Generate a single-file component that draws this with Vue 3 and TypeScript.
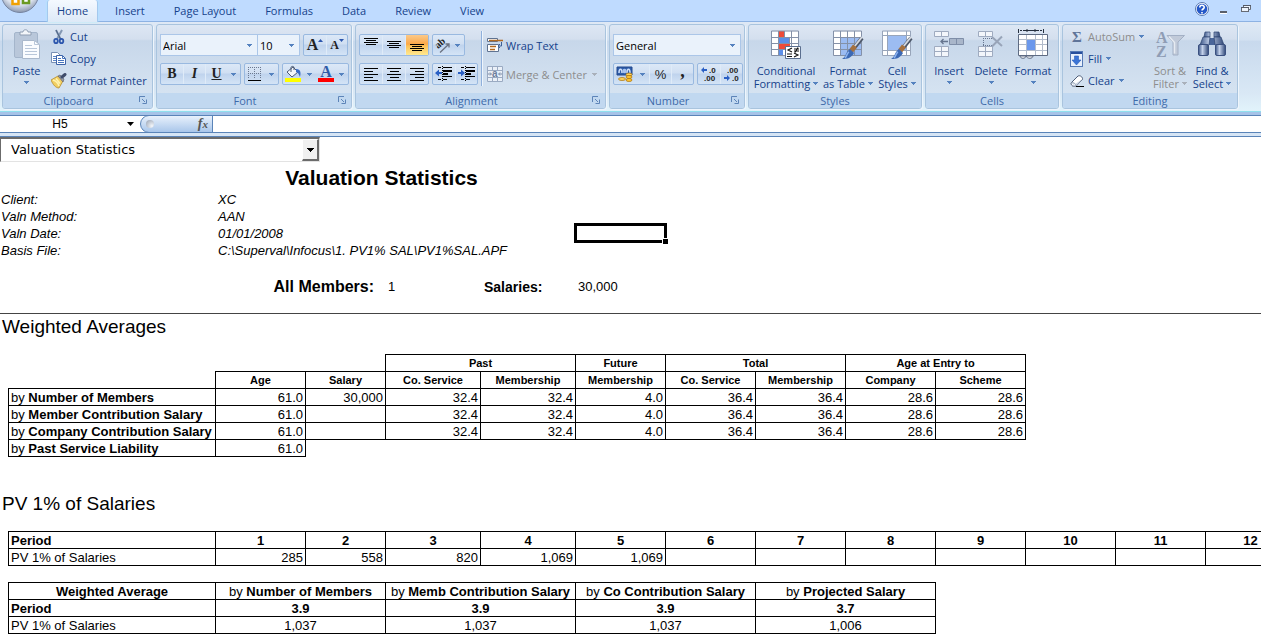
<script setup lang="ts">
import { ref } from 'vue'

const tabs = ['Home', 'Insert', 'Page Layout', 'Formulas', 'Data', 'Review', 'View']
const activeTab = ref('Home')
const fontName = ref('Arial')
const fontSize = ref('10')
const numberFormat = ref('General')
const cellRef = ref('H5')
const formula = ref('')
const report = ref('Valuation Statistics')

// Small drop-down arrow shared by the ribbon controls
const down = 'M0 0h5v1h-1v1h-1v1h-1v-1h-1v-1h-1z'
const launcher = 'M.5 6V.5H6M3 3l3 3M3.5 7.5h4v-4'

const info = [
  { label: 'Client:', value: 'XC', selected: false },
  { label: 'Valn Method:', value: 'AAN', selected: false },
  { label: 'Valn Date:', value: '01/01/2008', selected: true },
  { label: 'Basis File:', value: 'C:\\Superval\\Infocus\\1. PV1% SAL\\PV1%SAL.APF', selected: false },
]

const subHeads = ['Age', 'Salary', 'Co. Service', 'Membership', 'Membership', 'Co. Service', 'Membership', 'Company', 'Scheme']
const averages = [
  { name: 'Number of Members', cells: ['61.0', '30,000', '32.4', '32.4', '4.0', '36.4', '36.4', '28.6', '28.6'] },
  { name: 'Member Contribution Salary', cells: ['61.0', '', '32.4', '32.4', '4.0', '36.4', '36.4', '28.6', '28.6'] },
  { name: 'Company Contribution Salary', cells: ['61.0', '', '32.4', '32.4', '4.0', '36.4', '36.4', '28.6', '28.6'] },
  { name: 'Past Service Liability', cells: ['61.0'] },
]

const periods = Array.from({ length: 12 }, (_, i) => i + 1)
const pvValues = ['285', '558', '820', '1,069', '1,069', '', '', '', '', '', '', '']

const summaryHeads = ['Number of Members', 'Memb Contribution Salary', 'Co Contribution Salary', 'Projected Salary']
const summaryPeriods = ['3.9', '3.9', '3.9', '3.7']
const summaryValues = ['1,037', '1,037', '1,037', '1,006']

const vAlign = [
  { name: 'Top Align', top: 3, active: false },
  { name: 'Middle Align', top: 6, active: false },
  { name: 'Bottom Align', top: 9, active: true },
]
const hAlign = [
  { name: 'Align Left', path: 'M1 2.5h14M1 5.5h9M1 8.5h14M1 11.5h9M1 14.5h14' },
  { name: 'Center', path: 'M1 2.5h14M4 5.5h9M1 8.5h14M4 11.5h9M1 14.5h14' },
  { name: 'Align Right', path: 'M1 2.5h14M6 5.5h9M1 8.5h14M6 11.5h9M1 14.5h14' },
]
const indents = [
  { name: 'Decrease Indent', arrow: 'M0 7l4-3.5V6h3v2H4v2.5z' },
  { name: 'Increase Indent', arrow: 'M7 7L3 3.5V6H0v2h3v2.5z' },
]
</script>

<template>
  <div class="app">
    <header class="tabbar">
      <button class="office" aria-label="Office Button">
        <svg width="40" height="14" viewBox="0 0 40 14">
          <defs>
            <radialGradient id="orb" cx=".5" cy=".3" r=".7"><stop offset="0" stop-color="#fff" /><stop offset=".7" stop-color="#dce3ee" /><stop offset="1" stop-color="#8b98af" /></radialGradient>
          </defs>
          <circle cx="20" cy="-6" r="18.5" fill="url(#orb)" stroke="#75839f" />
          <path d="M12.500-2v6h6v-6" fill="#fff" stroke="#f0a000" stroke-width="2.500" />
          <path d="M23-2v5h6v-5" fill="#fff" stroke="#6a9a20" stroke-width="2.500" />
        </svg>
      </button>
      <nav class="tabs">
        <button v-for="t in tabs" :key="t" class="tab" :class="{ on: t === activeTab }" @click="activeTab = t">{{ t }}</button>
      </nav>
      <div class="wincontrols">
        <button aria-label="Help">
          <svg width="14" height="14" viewBox="0 0 14 14"><circle cx="7" cy="7" r="6.500" fill="#fff" stroke="#5878b0" /><circle cx="7" cy="7" r="5.300" fill="#2458c8" /><path d="M4.800 5.500c0-3 4.500-2.800 4.400-.2C9.200 7 7 7 7 8.600M7 10v1.600" fill="none" stroke="#fff" stroke-width="1.600" /></svg>
        </button>
        <button aria-label="Minimize">
          <svg width="14" height="14" viewBox="0 0 14 14"><path d="M3 11.500h7" stroke="#fff" /><path d="M3 10h7" stroke="#5a5f6a" stroke-width="2" /></svg>
        </button>
        <button aria-label="Restore">
          <svg width="14" height="14" viewBox="0 0 14 14"><path d="M4.500 5V3.500h7v4H10" fill="#eef4fc" stroke="#666b75" /><rect x="2.500" y="5.500" width="7" height="4" fill="#eef4fc" stroke="#666b75" /><path d="M2 5.500h8M4 3.500h8" stroke="#555a65" /></svg>
        </button>
      </div>
    </header>

    <section class="ribbon">
      <section class="group clipboard">
        <div class="body">
          <button class="big paste">
            <svg width="28" height="32" viewBox="0 0 28 32">
              <rect x="1.500" y="3.500" width="23" height="25" rx="1.500" fill="#b9c7da" stroke="#a4b5cb" />
              <path d="M7 6V3h3c0-3 5-3 5 0h3v3z" fill="#f3f6fa" stroke="#8e9db2" />
              <path d="M9.500 11.500h12l5 4v14h-17z" fill="#fafcff" stroke="#a9b8cc" />
              <path d="M21.500 11.500v4h5M12 16.500h7M12 19.500h12M12 22.500h12M12 25.500h12" fill="none" stroke="#b9c7da" />
            </svg>
            <span>Paste</span>
            <svg class="arr" width="5" height="3" viewBox="0 0 5 3"><path :d="down" /></svg>
          </button>
          <div class="list">
            <button class="small">
              <svg width="16" height="16" viewBox="0 0 16 16"><path d="M5 1l5 10M11 1L6 10" stroke="#8397b3" stroke-width="2" /><path d="M5 1l5 10" stroke="#3c5275" stroke-width=".8" /><ellipse cx="5" cy="12" rx="1.800" ry="2.200" fill="none" stroke="#2c56ad" stroke-width="1.800" /><ellipse cx="10.500" cy="12" rx="1.800" ry="2.200" fill="none" stroke="#2c56ad" stroke-width="1.800" /></svg>
              Cut
            </button>
            <button class="small">
              <svg width="16" height="16" viewBox="0 0 16 16"><path d="M.5 1.500h6l3 3v7h-9z" fill="#fff" stroke="#7890b5" /><path d="M2 5.500h5M2 7.500h5M2 9.500h5" stroke="#5b86c8" /><path d="M5.500 4.500h6l3 3v6h-9z" fill="#fff" stroke="#3e64a8" /><path d="M11.500 4.500v3h3M7 7.500h3M7 9.500h6M7 11.500h6" fill="none" stroke="#4674bd" /></svg>
              Copy
            </button>
            <button class="small">
              <svg width="16" height="16" viewBox="0 0 16 16"><path d="M0 7l7-4 5 5-4 7C5 15 2 12 0 7z" fill="#f2cf62" stroke="#b58d30" stroke-width=".8" /><path d="M2 7c3 1 5 3 6 6M5 5.500l4 5" fill="none" stroke="#fff3b0" stroke-width="1.500" /><path d="M7 3l2-1 4 4-1 3z" fill="#989ea8" stroke="#556" stroke-width=".6" /><path d="M11 4l3-2.500" stroke="#3f4c6a" stroke-width="3" stroke-linecap="round" /></svg>
              Format Painter
            </button>
          </div>
        </div>
        <footer>Clipboard<button class="launch" aria-label="Clipboard options"><svg width="8" height="8" viewBox="0 0 8 8"><path :d="launcher" /></svg></button></footer>
      </section>

      <section class="group font">
        <div class="body stack">
          <div class="line">
            <label class="combo fontname"><select v-model="fontName" aria-label="Font"><option>Arial</option></select><svg class="arr" width="5" height="3" viewBox="0 0 5 3"><path :d="down" /></svg></label>
            <label class="combo fontsize"><select v-model="fontSize" aria-label="Font size"><option>10</option></select><svg class="arr" width="5" height="3" viewBox="0 0 5 3"><path :d="down" /></svg></label>
            <div class="seg after">
              <button class="glyph g15" aria-label="Grow Font">A<svg width="5" height="3" viewBox="0 0 5 3"><path d="M0 3h5L2.500 0z" fill="#2c56ad" /></svg></button>
              <button class="glyph g12" aria-label="Shrink Font">A<svg width="5" height="3" viewBox="0 0 5 3"><path d="M0 0h5L2.500 3z" fill="#2c56ad" /></svg></button>
            </div>
          </div>
          <div class="line">
            <div class="seg biu">
              <button class="glyph bold">B</button>
              <button class="glyph ital">I</button>
              <button class="glyph under"><u>U</u></button>
              <button class="dd" aria-label="Underline options"><svg class="arr" width="5" height="3" viewBox="0 0 5 3"><path :d="down" /></svg></button>
            </div>
            <div class="seg">
              <button class="icon w20" aria-label="Borders"><svg width="14" height="14" viewBox="0 0 14 14"><path d="M.5 0v12M6.500 0v12M12.500 0v12M0 .5h13M0 6.500h13" stroke="#6b7890" stroke-dasharray="1 1" /><path d="M0 13.500h13" stroke="#000" /></svg></button>
              <button class="dd" aria-label="Border options"><svg class="arr" width="5" height="3" viewBox="0 0 5 3"><path :d="down" /></svg></button>
            </div>
            <div class="seg after">
              <button class="icon w20" aria-label="Fill Color"><svg width="18" height="16" viewBox="0 0 18 16"><path d="M3 6l6-5 5 5-6 5z" fill="#f4f6fa" stroke="#4c5a74" /><path d="M7 6V1.500c0-1.500 3-1.500 3 0V4" fill="none" stroke="#4c5a74" /><path d="M12 3c5 0 5 4 4 8-1-2-1-4-4-5z" fill="#3a6cc6" /><path d="M1 12h16v4H1z" fill="#ff0" /></svg></button>
              <button class="dd" aria-label="Fill options"><svg class="arr" width="5" height="3" viewBox="0 0 5 3"><path :d="down" /></svg></button>
              <button class="glyph fontcolor" aria-label="Font Color">A</button>
              <button class="dd" aria-label="Font color options"><svg class="arr" width="5" height="3" viewBox="0 0 5 3"><path :d="down" /></svg></button>
            </div>
          </div>
        </div>
        <footer>Font<button class="launch" aria-label="Font options"><svg width="8" height="8" viewBox="0 0 8 8"><path :d="launcher" /></svg></button></footer>
      </section>

      <section class="group align">
        <div class="body">
          <div class="stack">
            <div class="line">
              <div class="seg thirds">
                <button v-for="a in vAlign" :key="a.name" class="icon" :class="{ hot: a.active }" :aria-label="a.name">
                  <svg width="16" height="20" viewBox="0 0 16 20"><path :transform="`translate(0 ${a.top})`" d="M1 .5h14M3 2.500h10M1 4.500h14M3 6.500h10" stroke="#000" /></svg>
                </button>
              </div>
              <div class="seg">
                <button class="icon w18" aria-label="Orientation"><svg width="18" height="18" viewBox="0 0 18 18"><text x="5" y="13" transform="rotate(-40 5 13)" class="ab">ab</text><path d="M7 16.500L16 8M12.500 8H16v3.500" fill="none" stroke="#6b7280" stroke-width="1.300" /></svg></button>
                <button class="dd" aria-label="Orientation options"><svg class="arr" width="5" height="3" viewBox="0 0 5 3"><path :d="down" /></svg></button>
              </div>
            </div>
            <div class="line">
              <div class="seg thirds">
                <button v-for="a in hAlign" :key="a.name" class="icon" :aria-label="a.name">
                  <svg width="16" height="16" viewBox="0 0 16 16"><path :d="a.path" stroke="#000" /></svg>
                </button>
              </div>
              <div class="seg">
                <button v-for="a in indents" :key="a.name" class="icon w22" :aria-label="a.name">
                  <svg width="18" height="16" viewBox="0 0 18 16"><path d="M3 1.500h3M8 1.500h9M8 10.500h9M3 13.500h3M8 13.500h4" stroke="#000" /><path d="M8 5h9M8 8h5" stroke="#000" stroke-width="2" /><path d="M7.500 0v16" stroke="#000" stroke-dasharray="1 1" /><path :d="a.arrow" fill="#2a5fc4" /></svg>
                </button>
              </div>
            </div>
          </div>
          <div class="rule"></div>
          <div class="stack wide">
            <button class="small mid">
              <svg width="16" height="16" viewBox="0 0 16 16"><path d="M.5 1.500h10v3H.5zM.5 7.500h11v7H.5z" fill="#fff" stroke="#5f7391" /><path d="M2 3.500h14M3 9.500h6M3 12.500h5" stroke="#b26a20" stroke-width="1.400" /><path d="M14.500 5v4h-3M13 7l-2 2 2 2" fill="none" stroke="#3d5f96" /></svg>
              Wrap Text
            </button>
            <button class="small mid off">
              <svg width="16" height="16" viewBox="0 0 16 16"><path d="M.5.5h15v15H.5zM0 4.500h16M0 11.500h16M5.500 0v4M10.500 0v4M5.500 12v4M10.500 12v4" fill="#eaf0f8" stroke="#9aaac2" /><path d="M1 8h3M12 8h3M3 6.500L4.500 8 3 9.500M13 6.500L11.500 8 13 9.500" fill="none" stroke="#7688a4" /><text x="5" y="11" class="aa">a</text></svg>
              Merge &amp; Center
              <svg class="arr" width="5" height="3" viewBox="0 0 5 3"><path :d="down" /></svg>
            </button>
          </div>
        </div>
        <footer>Alignment<button class="launch" aria-label="Alignment options"><svg width="8" height="8" viewBox="0 0 8 8"><path :d="launcher" /></svg></button></footer>
      </section>

      <section class="group number">
        <div class="body stack">
          <div class="line">
            <label class="combo general"><select v-model="numberFormat" aria-label="Number format"><option>General</option></select><svg class="arr" width="5" height="3" viewBox="0 0 5 3"><path :d="down" /></svg></label>
          </div>
          <div class="line">
            <div class="seg">
              <button class="icon w22" aria-label="Accounting Format"><svg width="18" height="16" viewBox="0 0 18 16"><path d="M1 1h15v8H1z" fill="#2f5daa" stroke="#23488c" /><path d="M3 7c0-5 3-5 3 0M11 7c0-5 3-5 3 0" fill="none" stroke="#cfe0fa" stroke-width="1.500" /><circle cx="8.500" cy="5" r="2.200" fill="#a9c3ee" /><ellipse cx="13" cy="8.500" rx="3" ry="1.500" fill="#ffd257" stroke="#a8700c" stroke-width=".7" /><ellipse cx="13" cy="11" rx="3" ry="1.500" fill="#ffc531" stroke="#a8700c" stroke-width=".7" /><ellipse cx="13" cy="14" rx="3" ry="1.500" fill="#ffc531" stroke="#a8700c" stroke-width=".7" /><ellipse cx="6" cy="13" rx="3.500" ry="1.500" fill="#ffd257" stroke="#a8700c" stroke-width=".7" /></svg></button>
              <button class="dd" aria-label="Accounting options"><svg class="arr" width="5" height="3" viewBox="0 0 5 3"><path :d="down" /></svg></button>
              <button class="glyph pct w22">%</button>
              <button class="glyph comma w22">,</button>
            </div>
            <div class="seg after">
              <button class="icon w22" aria-label="Increase Decimal"><svg width="18" height="18" viewBox="0 0 18 18"><path d="M1 5l3-3v2h3v2H4v2z" fill="#2a5fc4" /><text x="9" y="8" class="dec">.0</text><text x="4" y="16" class="dec">.00</text></svg></button>
              <button class="icon w22" aria-label="Decrease Decimal"><svg width="18" height="18" viewBox="0 0 18 18"><text x="4" y="8" class="dec">.00</text><path d="M7 13l-3-3v2H1v2h3v2z" fill="#2a5fc4" /><text x="9" y="16" class="dec">.0</text></svg></button>
            </div>
          </div>
        </div>
        <footer>Number<button class="launch" aria-label="Number options"><svg width="8" height="8" viewBox="0 0 8 8"><path :d="launcher" /></svg></button></footer>
      </section>

      <section class="group styles">
        <div class="body">
          <button class="big w74">
            <svg width="32" height="32" viewBox="0 0 32 32"><path d="M1.500 2.500h27v24h-27z" fill="#fff" /><path d="M8 2h6v6H8zM8 14h12v6H8z" fill="#ee4b38" /><path d="M8 8h11v6H8zM8 20h5v6H8z" fill="#5b8ee8" /><path d="M1.500 2v24.500h27V2zM1 8.500h28M1 14.500h28M1 20.500h28M8.500 2v24M14.500 2v6M19.500 8v6M21.500 2v24" fill="none" stroke="#8491a8" /><path d="M15.500 17.500h15v12h-15z" fill="#fff" stroke="#5b6f8f" /><path d="M22 19l-4 2 4 2M17 25h5M17 27.500h5M24 20h5M24 22h5M28 18.500l-3 5M24 24l4 2-4 2" fill="none" stroke="#111" stroke-width="1.100" /></svg>
            <span>Conditional</span>
            <span>Formatting <svg class="arr" width="5" height="3" viewBox="0 0 5 3"><path :d="down" /></svg></span>
          </button>
          <button class="big w50">
            <svg width="32" height="32" viewBox="0 0 32 32"><path d="M1.500 2.500h28v24h-28z" fill="#fff" /><path d="M8 8h21v18H8z" fill="#9cbcf2" /><path d="M1.500 2v24.500h28V2zM1 8.500h29M1 14.500h29M1 20.500h29M8.500 2v24M15.500 2v24M22.500 2v24" fill="none" stroke="#8491a8" /><path d="M30 9L22 19" stroke="#4b5668" stroke-width="4" /><path d="M30 8L22 18" stroke="#d3d8e0" stroke-width="2" /><path d="M23 17l-4 5" stroke="#a5713f" stroke-width="5" /><path d="M18 20l4 4c-3 5-6 6-12 6 4-2 4-8 8-10z" fill="#3c69b4" /><path d="M17 23c-2 1-2 4-4 6" fill="none" stroke="#8db3ef" stroke-width="1.500" /></svg>
            <span>Format</span>
            <span>as Table <svg class="arr" width="5" height="3" viewBox="0 0 5 3"><path :d="down" /></svg></span>
          </button>
          <button class="big w48">
            <svg width="32" height="32" viewBox="0 0 32 32"><path d="M1.500 2.500h28v24h-28z" fill="#fff" /><path d="M6 7h19v14H6z" fill="#9cbcf2" /><path d="M1.500 2v24.500h28V2zM1 6.500h29M1 21.500h29M6.500 2v24M25.500 2v24" fill="none" stroke="#98a5ba" /><path d="M30 9L22 19" stroke="#4b5668" stroke-width="4" /><path d="M30 8L22 18" stroke="#d3d8e0" stroke-width="2" /><path d="M23 17l-4 5" stroke="#a5713f" stroke-width="5" /><path d="M18 20l4 4c-3 5-6 6-12 6 4-2 4-8 8-10z" fill="#3c69b4" /><path d="M17 23c-2 1-2 4-4 6" fill="none" stroke="#8db3ef" stroke-width="1.500" /></svg>
            <span>Cell</span>
            <span>Styles <svg class="arr" width="5" height="3" viewBox="0 0 5 3"><path :d="down" /></svg></span>
          </button>
        </div>
        <footer>Styles</footer>
      </section>

      <section class="group cells">
        <div class="body">
          <button class="big w42">
            <svg width="32" height="32" viewBox="0 0 32 32"><path d="M1.500 2.500h14v5h-14zM8.500 2v6M1.500 17.500h14v10h-14zM8.500 17v11M1 22.500h15" fill="#f3f6fb" stroke="#9fabc0" /><path d="M16.500 9.500h14v6h-14zM23.500 9v7" fill="#a9b6ca" stroke="#7f8ea8" /><path d="M8 12.500h7M10.500 10L8 12.500l2.500 2.500" fill="none" stroke="#66758f" stroke-width="1.300" /></svg>
            <span>Insert</span>
            <svg class="arr" width="5" height="3" viewBox="0 0 5 3"><path :d="down" /></svg>
          </button>
          <button class="big w42">
            <svg width="32" height="32" viewBox="0 0 32 32"><path d="M3.500 2.500h14v5h-14zM10.500 2v6M3.500 17.500h14v10h-14zM10.500 17v11M3 22.500h15" fill="#f3f6fb" stroke="#9fabc0" /><path d="M8 9.500h12M8 16.500h12M8.500 9v7" fill="none" stroke="#66758f" stroke-dasharray="1 1" /><path d="M17 8l10 9M27 7.500L17 17.500" stroke="#98a4b8" stroke-width="2" /></svg>
            <span>Delete</span>
            <svg class="arr" width="5" height="3" viewBox="0 0 5 3"><path :d="down" /></svg>
          </button>
          <button class="big w42">
            <svg width="32" height="32" viewBox="0 0 32 32"><path d="M1.500 5.500h29v21h-29z" fill="#fff" stroke="#5e6b82" /><path d="M10 11h8v10h-8z" fill="#6b98ec" /><path d="M2 10.500h28M2 15.500h7M19 15.500h11M2 21.500h28M9.500 6v20M18.500 6v20M25.500 6v20" stroke="#b1bbcb" /><path d="M3 27c0 3 6 3 6 0 1 3 7 3 7 0z" fill="#fff" stroke="#5e6b82" /><path d="M1.500 0v4M26.500 0v4" stroke="#26303f" /><path d="M3 1.500h6M20 1.500h6" stroke="#26303f" stroke-dasharray="2 1" /><path d="M8 1.500h12M10 0v3M18 0v3" fill="none" stroke="#26303f" /></svg>
            <span>Format</span>
            <svg class="arr" width="5" height="3" viewBox="0 0 5 3"><path :d="down" /></svg>
          </button>
        </div>
        <footer>Cells</footer>
      </section>

      <section class="group editing">
        <div class="body">
          <div class="list">
            <button class="small off dark">
              <svg width="14" height="16" viewBox="0 0 14 16"><text x="2" y="13" class="sigma">Σ</text></svg>
              AutoSum
              <svg class="arr" width="5" height="3" viewBox="0 0 5 3"><path :d="down" /></svg>
            </button>
            <button class="small">
              <svg width="14" height="16" viewBox="0 0 14 16"><rect x=".5" y=".5" width="12" height="15" fill="#e8f0fc" stroke="#5579b5" /><path d="M1 1h11v2H1z" fill="#274f9c" /><path d="M4.500 5h4v4H11l-4.500 5L2 9h2.500z" fill="#3b74d6" stroke="#285cb8" stroke-width=".6" /></svg>
              Fill
              <svg class="arr" width="5" height="3" viewBox="0 0 5 3"><path :d="down" /></svg>
            </button>
            <button class="small">
              <svg width="14" height="16" viewBox="0 0 14 16"><path d="M1 10l7-7c2-1 5 1 4.500 3.500L6 13c-2 1-5 0-5-3z" fill="#fff" stroke="#4d5d78" /><path d="M1 10c1-1.500 5 0 5 3M2 13l4 .5 6-7" fill="#c9d3e2" stroke="#8592a8" stroke-width=".7" /><path d="M6 13.500h8" stroke="#000" /></svg>
              Clear
              <svg class="arr" width="5" height="3" viewBox="0 0 5 3"><path :d="down" /></svg>
            </button>
          </div>
          <button class="big off w42">
            <svg width="32" height="32" viewBox="0 0 32 32"><path d="M13 6.500h17.500L24 13v13h-5V13z" fill="#c1cad9" stroke="#a3b0c5" /><path d="M15 7.500l5.500 6v11" fill="none" stroke="#e6ebf2" stroke-width="1.500" /><text x="2" y="14" class="az">A</text><text x="2" y="28" class="az">Z</text></svg>
            <span>Sort &amp;</span>
            <span>Filter <svg class="arr" width="5" height="3" viewBox="0 0 5 3"><path :d="down" /></svg></span>
          </button>
          <button class="big w42">
            <svg width="32" height="32" viewBox="0 0 32 32">
              <defs><linearGradient id="barrel"><stop offset="0" stop-color="#3c5688" /><stop offset=".4" stop-color="#c3d1ea" /><stop offset="1" stop-color="#2f4777" /></linearGradient></defs>
              <path d="M9 3h5v5H8zM18 3h5l1 5h-6z" fill="url(#barrel)" stroke="#2c4370" stroke-width=".7" /><path d="M13 9h6v7h-6z" fill="#4a669a" /><path d="M7 8h7l-1 8H4zM18 8h7l3 8h-9z" fill="url(#barrel)" stroke="#2c4370" stroke-width=".7" /><rect x="2.500" y="15.500" width="10" height="11" rx="1.500" fill="url(#barrel)" stroke="#3a5080" /><rect x="19.500" y="15.500" width="10" height="11" rx="1.500" fill="url(#barrel)" stroke="#3a5080" /></svg>
            <span>Find &amp;</span>
            <span>Select <svg class="arr" width="5" height="3" viewBox="0 0 5 3"><path :d="down" /></svg></span>
          </button>
        </div>
        <footer>Editing</footer>
      </section>
    </section>

    <div class="formulabar">
      <input v-model="cellRef" class="namebox" aria-label="Name box" />
      <button class="namedrop" aria-label="Names"><svg width="7" height="4" viewBox="0 0 7 4"><path d="M0 0h7L3.500 4z" /></svg></button>
      <div class="fxzone">
        <span class="knob"></span>
        <button class="fx" aria-label="Insert Function">f<small>x</small></button>
      </div>
      <input v-model="formula" class="formula" aria-label="Formula" />
    </div>

    <main class="sheet">
      <label class="picker">
        <select v-model="report" aria-label="Report"><option>Valuation Statistics</option></select>
        <span class="pickbtn"><svg width="7" height="4" viewBox="0 0 7 4"><path d="M0 0h7v1h-1v1h-1v1h-1v1h-1v-1h-1v-1h-1v-1h-1z" /></svg></span>
      </label>

      <h1>Valuation Statistics</h1>

      <div class="info">
        <div v-for="row in info" :key="row.label" class="inforow">
          <span>{{ row.label }}</span><span class="val">{{ row.value }}</span><span v-if="row.selected" class="cursor"></span>
        </div>
      </div>

      <div class="totals">
        <strong class="members">All Members:</strong><span>1</span><strong class="salaries">Salaries:</strong><span>30,000</span>
      </div>

      <h2 class="ruled">Weighted Averages</h2>

      <table class="averages">
        <colgroup><col class="c207" /><col class="c90" /><col class="c80" /><col class="c95" /><col class="c95" /><col v-for="n in 6" :key="n" class="c90" /></colgroup>
        <thead>
          <tr><td class="none" colspan="3"></td><th colspan="2">Past</th><th>Future</th><th colspan="2">Total</th><th colspan="2">Age at Entry to</th></tr>
          <tr><td class="none"></td><th v-for="(h, i) in subHeads" :key="i">{{ h }}</th></tr>
        </thead>
        <tbody>
          <tr v-for="r in averages" :key="r.name"><td class="name">by <b>{{ r.name }}</b></td><td v-for="(c, i) in r.cells" :key="i" class="num">{{ c }}</td></tr>
        </tbody>
      </table>

      <h2 class="second">PV 1% of Salaries</h2>

      <table class="periods">
        <colgroup><col class="c207" /><col class="c90" /><col class="c80" /><col class="c95" /><col class="c95" /><col v-for="n in 8" :key="n" class="c90" /></colgroup>
        <tbody>
          <tr><th class="name">Period</th><th v-for="p in periods" :key="p">{{ p }}</th></tr>
          <tr><td class="name">PV 1% of Salaries</td><td v-for="(v, i) in pvValues" :key="i" class="num">{{ v }}</td></tr>
        </tbody>
      </table>

      <table class="summary">
        <colgroup><col class="c207" /><col class="c170" /><col class="c190" /><col class="c180" /><col class="c180" /></colgroup>
        <tbody>
          <tr><th>Weighted Average</th><td v-for="h in summaryHeads" :key="h" class="mid">by <b>{{ h }}</b></td></tr>
          <tr><th class="name">Period</th><th v-for="(v, i) in summaryPeriods" :key="i">{{ v }}</th></tr>
          <tr><td class="name">PV 1% of Salaries</td><td v-for="(v, i) in summaryValues" :key="i" class="mid">{{ v }}</td></tr>
        </tbody>
      </table>
    </main>
  </div>
</template>

<style>
body { margin: 0; background: #fff; overflow-x: hidden; }
</style>

<style scoped>
.app { font-family: "Open Sans", "Noto Sans", sans-serif; font-size: 11px; color: #15428b; overflow: hidden; }
button { font: inherit; color: inherit; background: none; border: 0; padding: 0; margin: 0; white-space: nowrap; }
input, select { font: inherit; color: #000; border: 0; padding: 0; margin: 0; background: none; outline: 0; appearance: none; min-width: 0; border-radius: 0; }
svg { display: block; flex: none; }
.arr { fill: #5582bf; shape-rendering: crispEdges; }

.tabbar { display: flex; height: 22px; background: #bfdbff; border-bottom: 1px solid #8db2e3; box-sizing: border-box; }
.office { width: 47px; height: 14px; overflow: hidden; }
.tabs { display: flex; flex: 1; gap: 5px; height: 22px; }
.tab { padding: 0 12px; line-height: 22px; height: 22px; border-radius: 3px 3px 0 0; }
.tab.on { padding: 0 9px; background: linear-gradient(#f4f9ff, #dde9f7); border: 1px solid #a4c8ee; border-top: 0; border-bottom: 0; box-shadow: 0 0 2px #9ff0ff; }
.wincontrols { display: flex; gap: 8px; padding: 2px 8px 0 0; align-items: flex-start; }

.ribbon { display: flex; gap: 3px; padding: 2px; height: 90px; box-sizing: border-box; background: linear-gradient(#dfe9f5, #d3e1f1 20%, #c8d9ed 22%, #d9e8f5 80%, #e2f3fb); border-bottom: 1px solid #8fe0ee; }
.group { display: flex; flex-direction: column; box-sizing: border-box; border: 1px solid #a9c4de; border-radius: 3px; background: linear-gradient(#dde7f4, #d4dfee 17%, #c7d7ea 19%, #d9e6f3); box-shadow: 1px 1px 0 #eef5fc; flex: none; }
.clipboard { width: 151px; }
.font { width: 196px; }
.align { width: 251px; }
.number { width: 136px; }
.styles { width: 174px; }
.cells { width: 134px; }
.editing { width: 176px; }
.body { display: flex; flex: 1; box-sizing: border-box; }
.group footer { position: relative; height: 15px; line-height: 15px; text-align: center; padding-right: 18px; background: #c1d8f0; color: #3e6aaa; border-radius: 0 0 2px 2px; }
.styles footer, .cells footer, .editing footer { padding-right: 0; }
.launch { position: absolute; right: 5px; top: 3px; }
.launch path { fill: none; stroke: #5d84b8; }

.stack { display: flex; flex-direction: column; gap: 7px; padding: 9px 3px 0; }
.line { display: flex; gap: 3px; height: 22px; }
.seg { display: flex; height: 22px; box-sizing: border-box; border: 1px solid #99b9e0; border-radius: 2px; background: linear-gradient(#dce8f7, #d0dff2 45%, #bfd3ed 50%, #d4e4f6); flex: none; }
.seg svg { overflow: visible; }
.seg button + button { border-left: 1px solid #dfebf8; }
.seg button.dd { width: 13px; border-left: 0; }
.seg .w18 { width: 18px; }
.seg .w20 { width: 20px; }
.seg .w22 { width: 22px; }
.icon, .dd, .glyph { display: flex; align-items: center; justify-content: center; box-sizing: border-box; flex: none; }
.thirds .icon { width: 22px; }
.thirds .icon + .icon { width: 23px; }
.hot { background: linear-gradient(#fbc98a, #fca847 45%, #fdc256 55%, #ffe991); }
.glyph { font-family: "Liberation Serif", serif; font-weight: bold; color: #222; }
.glyph svg { align-self: flex-start; margin-top: 4px; }
.g15 { font-size: 16px; width: 22px; }
.g12 { font-size: 12px; width: 21px; }
.after { margin-left: auto; }
.biu .glyph { width: 22px; font-size: 14px; }
.ital { font-style: italic; }
.fontcolor { font-size: 16px; line-height: 12px; color: #2f5ba8; }
.seg button.fontcolor { align-self: center; height: 16px; border-left: 0; border-bottom: 4px solid #f00; margin: 0 1px 0 2px; width: 16px; }
.pct { font-family: "Liberation Sans", sans-serif; font-size: 13px; font-weight: normal; }
.comma { font-size: 18px; line-height: 14px; padding-bottom: 6px; }
.ab { font: bold 10px "Liberation Serif", serif; fill: #222; }
.aa { font: bold 10px "Liberation Sans", sans-serif; fill: #6d7f9c; }
.dec { font: bold 8px "Liberation Sans", sans-serif; fill: #222; }
.sigma { font: bold 15px "Liberation Serif", serif; fill: #5f7499; }
.az { font: bold 16px "Liberation Serif", serif; fill: #8f9db5; }
.rule { width: 1px; margin: 6px 0 7px; background: #8fb0dc; border-right: 1px solid #eef5fc; }
.combo { display: flex; position: relative; box-sizing: border-box; height: 22px; border: 1px solid #abc6e8; background: #eaf2fb; }
.combo select { width: 100%; padding-left: 2px; }
.combo .arr { position: absolute; right: 5px; top: 9px; pointer-events: none; }
.fontname { width: 98px; }
.fontsize { width: 43px; margin-left: -4px; }
.general { flex: 1; }
.wide { padding: 9px 0 0 4px; }

.list { display: flex; flex-direction: column; }
.small { display: flex; align-items: center; gap: 3px; height: 22px; padding-top: 1px; box-sizing: border-box; }
.small.mid { padding-top: 0; }
.small .arr { margin-left: 2px; }
.off { color: #8d8d8d; }
.off .arr { fill: #a9b0ba; }
.dark .arr { fill: #5582bf; }
.big { display: flex; flex-direction: column; align-items: center; line-height: 13px; padding-top: 4px; }
.big > svg:first-child { margin-bottom: 3px; }
.big span { display: flex; align-items: center; gap: 3px; }
.big > .arr { margin-top: 4px; }
.paste { width: 47px; margin-right: 1px; }
.w74 { width: 74px; }
.w50 { width: 50px; }
.w42 { width: 42px; }
.w48 { width: 48px; }
.cells .body { padding-left: 2px; }
.editing .list { width: 79px; padding-left: 7px; }
.editing .small { gap: 4px; }
.editing .small .arr { margin-left: 0; }

.formulabar { display: flex; height: 24px; box-sizing: border-box; border-top: 3px solid #a6c3e8; border-bottom: 3px solid #d6e5f5; background: #fff; box-shadow: inset 0 1px 0 #5a84b8, inset 0 -1px 0 #5a84b8; }
.namebox { width: 120px; text-align: center; font: 12px "Liberation Sans", sans-serif; }
.namedrop { width: 20px; display: flex; justify-content: center; align-items: center; }
.fxzone { display: flex; box-sizing: border-box; align-items: center; justify-content: space-between; width: 73px; padding: 0 4px 0 5px; border: 1px solid #5a84b8; border-radius: 9px 0 0 9px; background: linear-gradient(#e8f1fc, #a9c6ea); }
.knob { width: 8px; height: 8px; border-radius: 4px; background: radial-gradient(circle at 6px 6px, #f4f7fb, #97a1b2); }
.fx { font: italic bold 14px/14px "Liberation Serif", serif; color: #555; }
.fx small { font-size: 11px; }
.formula { flex: 1; }

.sheet { border-top: 1px solid #5a84b8; font: 13px/16px "Liberation Sans", Arial, sans-serif; color: #000; }
.picker { display: flex; box-sizing: border-box; width: 320px; height: 25px; border: 1px solid #e3e3e3; border-top: 2px solid #6b6b6b; border-left: 1px solid #6b6b6b; }
.picker select { flex: 1; font: 13px "DejaVu Sans", sans-serif; padding: 0 0 2px 10px; }
.pickbtn { display: flex; align-items: center; justify-content: center; box-sizing: border-box; width: 17px; background: #f0f0f0; border: 1px solid #fff; border-right: 2px solid #6b6b6b; border-bottom: 2px solid #6b6b6b; }
h1 { margin: 4px 0 1px; width: 763px; text-align: center; font-size: 21px; line-height: 24px; }
.info { font-style: italic; }
.inforow { display: grid; grid-template-columns: 215px 360px 90px; height: 17px; line-height: 17px; }
.inforow > span { padding-left: 1px; white-space: nowrap; }
.inforow > .val { padding-left: 3px; }
.inforow > .cursor { position: relative; padding: 0; border: 3px solid #000; margin: -2px -2px -1px -1px; }
.cursor::after { content: ""; position: absolute; right: -4px; bottom: -4px; width: 5px; height: 5px; background: #000; border: 1px solid #fff; border-right: 0; border-bottom: 0; }
.totals { display: grid; grid-template-columns: 374px 106px 95px 90px; margin-top: 18px; height: 20px; line-height: 20px; align-items: center; }
.totals span { padding-left: 3px; }
.totals .members { text-align: right; font-size: 16px; }
.totals .members + span { padding-left: 14px; }
.totals .salaries { font-size: 14px; padding-left: 4px; }
h2 { margin: 0; padding-left: 2px; font-size: 19px; font-weight: normal; line-height: 24px; }
.ruled { margin-top: 16px; border-top: 1px solid #444; padding-top: 1px; }
.second { margin-top: 35px; }

table { border-collapse: collapse; table-layout: fixed; margin-left: 8px; }
tr { height: 17px; }
th, td { box-sizing: border-box; height: 17px; border: 1px solid #000; padding: 1px 2px 0; line-height: 15px; white-space: nowrap; overflow: hidden; }
td.none { border: 0; }
thead th { font-size: 11px; }
.name { text-align: left; padding-right: 0; }
.num { text-align: right; }
.mid { text-align: center; }
.c207 { width: 207px; } .c90 { width: 90px; } .c80 { width: 80px; } .c95 { width: 95px; }
.c170 { width: 170px; } .c190 { width: 190px; } .c180 { width: 180px; }
.averages { width: 1018px; margin-top: 15px; }
.periods { width: 1288px; margin-top: 15px; }
.summary { width: 928px; margin-top: 16px; margin-bottom: 7px; }
</style>
